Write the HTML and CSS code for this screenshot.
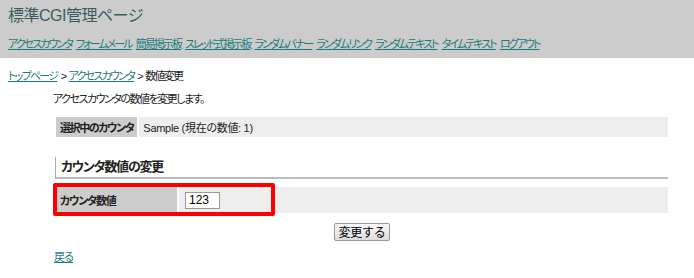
FILE: index.html
```html
<!DOCTYPE html>
<html lang="ja">
<head>
    <meta charset="UTF-8">
    <title>標準CGI管理ページ</title>
    <link rel="stylesheet" href="styles.css">
</head>
<body>
    <div class="header">
        <h1>標準CGI管理ページ</h1>
        <div class="nav">
            <a href="#">アクセスカウンタ</a>
            <a href="#">フォームメール</a>
            <a href="#">簡易掲示板</a>
            <a href="#">スレッド式掲示板</a>
            <a href="#">ランダムバナー</a>
            <a href="#">ランダムリンク</a>
            <a href="#">ランダムテキスト</a>
            <a href="#">タイムテキスト</a>
            <a href="#">ログアウト</a>
        </div>
    </div>
    <div class="content">
        <p class="crumb"><a href="#">トップページ</a> &gt; <a href="#">アクセスカウンタ</a> &gt; 数値変更</p>
        <div class="box">
            <p class="lead">アクセスカウンタの数値を変更します。</p>
            <table class="info">
                <tr>
                    <th>選択中のカウンタ</th>
                    <td>Sample (現在の数値: 1)</td>
                </tr>
            </table>
            <h2>カウンタ数値の変更</h2>
            <div class="formwrap">
                <table class="form">
                    <tr>
                        <th>カウンタ数値</th>
                        <td><input type="text" class="num" value="123"></td>
                    </tr>
                </table>
                <div class="mark"></div>
            </div>
            <div class="submit">
                <button class="btn">変更する</button>
            </div>
            <p class="back"><a href="#">戻る</a></p>
        </div>
    </div>
</body>
</html>
```

FILE: styles.css
```css
html,body
{
    margin: 0;
    padding: 0;
}
*
{
    box-sizing: border-box;
}
body
{
    font-family: "Liberation Sans", "Noto Sans CJK JP", sans-serif;
    font-size: 11px;
    color: #222;
    background: #fff;
    font-feature-settings: "palt";
}
a
{
    color: #1b7c7c;
}

.header
{
    height: 58px;
    background: #cccccc;
    padding: 5px 8px 0 8px;
}
.header > h1
{
    margin: 0;
    font-size: 16px;
    font-weight: normal;
    color: #3b5c5c;
    line-height: 22px;
    letter-spacing: -0.5px;
}
.nav
{
    margin-top: 9px;
    line-height: 16px;
    letter-spacing: -1.95px;
    word-spacing: 3px;
}

.content
{
    padding: 0 8px;
}
.crumb
{
    margin: 0;
    padding-top: 10px;
    line-height: 16px;
    letter-spacing: -1.75px;
    word-spacing: 2px;
}
.box
{
    margin-left: 48px;
    width: 612px;
}
.lead
{
    margin: 7px 0 0 -3px;
    line-height: 16px;
    letter-spacing: -1.5px;
}
.info, .form
{
    border-collapse: separate;
    border-spacing: 2px 0;
    margin-left: -2px;
    width: 616px;
}
.info
{
    margin-top: 10px;
}
.info th, .info td
{
    height: 20px;
    padding: 0 4px;
    text-align: left;
    white-space: nowrap;
}
.info th
{
    width: 81px;
    background: #cccccc;
    font-weight: bold;
    color: #222;
    letter-spacing: -1.4px;
}
.info td
{
    background: #eeeeee;
    letter-spacing: -0.3px;
}

h2
{
    margin: 20px 0 0 -1px;
    height: 22px;
    border-left: 1px solid #aaa;
    border-bottom: 2px solid #bbb;
    padding-left: 5px;
    font-size: 13px;
    line-height: 20px;
    font-weight: bold;
    color: #222;
    letter-spacing: -1.2px;
}

.formwrap
{
    position: relative;
    margin-top: 8px;
}
.form th, .form td
{
    height: 26px;
    padding: 0 4px;
    text-align: left;
    white-space: nowrap;
}
.form th
{
    width: 121px;
    background: #cccccc;
    font-weight: bold;
    letter-spacing: -1.2px;
}
.form td
{
    background: #eeeeee;
}
.num
{
    display: block;
    width: 35px;
    height: 17px;
    margin-left: 2px;
    border: 1px solid #999;
    padding: 0 3px;
    font-family: "Liberation Sans", sans-serif;
    font-size: 12px;
    color: #000;
}
.mark
{
    position: absolute;
    left: -3px;
    top: -4px;
    width: 222px;
    height: 33px;
    border: 4px solid #ff0000;
    border-radius: 2px;
}

.submit
{
    text-align: center;
    margin-top: 10px;
}
.btn
{
    height: 18px;
    width: 56px;
    padding: 0;
    font-family: "Noto Sans CJK JP", sans-serif;
    font-size: 12px;
    line-height: 14px;
    color: #000;
    background: linear-gradient(#fafafa, #dddddd);
    border: 1px solid #999;
    border-radius: 2px;
    letter-spacing: -0.3px;
}
.back
{
    margin: 8px 0 0 -2px;
    line-height: 16px;
    letter-spacing: -1px;
}
```
